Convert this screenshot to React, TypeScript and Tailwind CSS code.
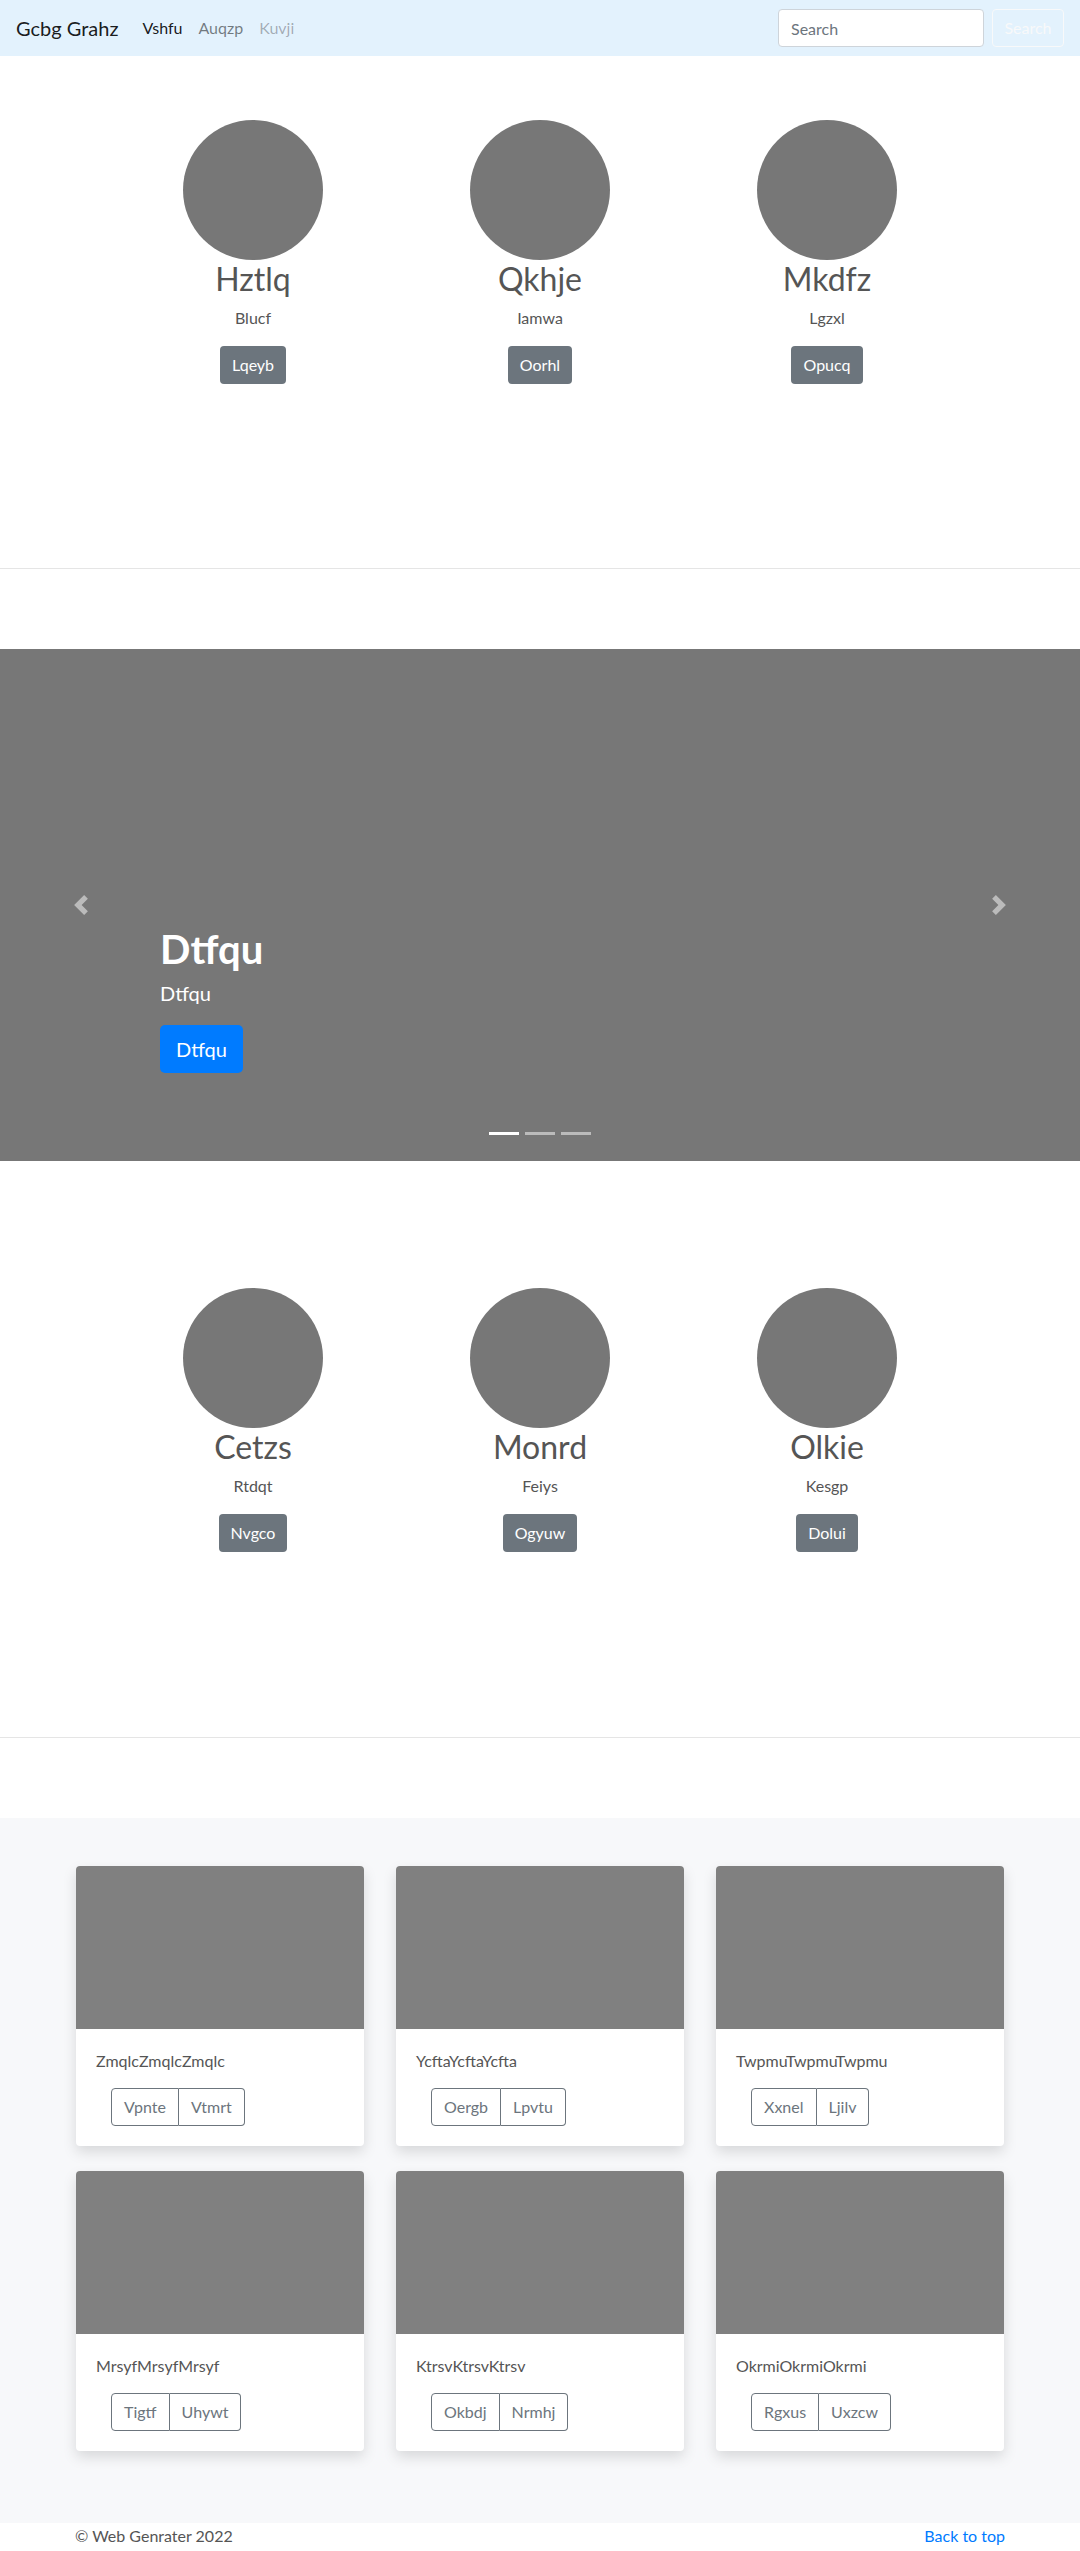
import React from "react";

const font = { fontFamily: "Lato, 'Open Sans', 'Liberation Sans', sans-serif" };

function Feature({ title, sub, btn }: { title: string; sub: string; btn: string }) {
  return (
    <div className="flex flex-col items-center text-center">
      <div className="w-[140px] h-[140px] rounded-full bg-[#777777]" />
      <h2 className="text-[32px] leading-[38px] font-normal text-[#555555] mb-2">{title}</h2>
      <p className="text-[16px] leading-6 text-[#555555] mb-4">{sub}</p>
      <button className="h-[38px] px-3 rounded-[4px] bg-[#6c757d] text-white text-[16px]">{btn}</button>
    </div>
  );
}

function Features({ items }: { items: [string, string, string][] }) {
  return (
    <div className="w-[861px] mx-auto grid grid-cols-3">
      {items.map(([t, s, b]) => (
        <Feature key={t} title={t} sub={s} btn={b} />
      ))}
    </div>
  );
}

function Card({ title, a, b }: { title: string; a: string; b: string }) {
  return (
    <div className="bg-white rounded-[4px] shadow-[0_6px_14px_rgba(0,0,0,0.13)] overflow-hidden">
      <div className="h-[163px] bg-[#808080]" />
      <div className="px-5 pt-5 pb-5">
        <p className="text-[16px] leading-6 text-[#555555] mb-[15px]">{title}</p>
        <div className="ml-[15px] inline-flex">
          <button className="h-[38px] px-3 border border-[#6c757d] text-[#6c757d] text-[16px] rounded-l-[4px]">{a}</button>
          <button className="h-[38px] px-3 border border-l-0 border-[#6c757d] text-[#6c757d] text-[16px] rounded-r-[4px]">{b}</button>
        </div>
      </div>
    </div>
  );
}

function Chevron({ dir }: { dir: "left" | "right" }) {
  return (
    <svg width="20" height="20" viewBox="0 0 8 8" fill="rgba(255,255,255,0.5)">
      {dir === "left" ? (
        <path d="M5.25 0l-4 4 4 4 1.5-1.5L4.25 4l2.5-2.5L5.25 0z" />
      ) : (
        <path d="M2.75 0l-1.5 1.5L3.75 4l-2.5 2.5L2.75 8l4-4-4-4z" />
      )}
    </svg>
  );
}

export default function App() {
  return (
    <div style={font} className="bg-white min-h-[2600px]">
      {/* Navbar */}
      <nav className="h-14 bg-[#e3f2fd] flex items-center px-4">
        <span className="text-[20px] text-[rgba(0,0,0,0.9)] mr-4">Gcbg Grahz</span>
        <a className="px-2 text-[16px] text-[rgba(0,0,0,0.9)]">Vshfu</a>
        <a className="px-2 text-[16px] text-[rgba(0,0,0,0.5)]">Auqzp</a>
        <a className="px-2 text-[16px] text-[rgba(0,0,0,0.3)]">Kuvji</a>
        <div className="ml-auto flex items-center gap-2">
          <input
            placeholder="Search"
            className="w-[206px] h-[38px] px-3 bg-white border border-[#ced4da] rounded-[4px] text-[16px] placeholder:text-[#6c757d] outline-none"
          />
          <button className="w-[72px] h-[38px] border border-[#f8f9fa] rounded-[4px] text-[#f8f9fa] text-[16px]">Search</button>
        </div>
      </nav>

      {/* Section 1 */}
      <section className="pt-16 pb-[184px]">
        <Features items={[["Hztlq", "Blucf", "Lqeyb"], ["Qkhje", "Iamwa", "Oorhl"], ["Mkdfz", "Lgzxl", "Opucq"]]} />
      </section>
      <div className="h-px bg-[#e5e5e5]" />

      {/* Carousel */}
      <div className="mt-20 relative h-[512px] bg-[#777777] flex flex-col justify-end pl-[160px] pb-[88px]">
        <div className="absolute left-[71px] top-[246px]">
          <Chevron dir="left" />
        </div>
        <div className="absolute right-[71px] top-[246px]">
          <Chevron dir="right" />
        </div>
        <h1 className="text-[40px] leading-[48px] font-bold text-white">Dtfqu</h1>
        <p className="text-[20px] leading-[30px] text-white mt-[5px] mb-[17px]">Dtfqu</p>
        <div>
          <button className="h-12 px-4 rounded-[5px] bg-[#007bff] text-white text-[20px]">Dtfqu</button>
        </div>
        <div className="absolute bottom-[26px] left-0 right-0 flex justify-center gap-[6px]">
          <span className="w-[30px] h-[3px] bg-white" />
          <span className="w-[30px] h-[3px] bg-white opacity-50" />
          <span className="w-[30px] h-[3px] bg-white opacity-50" />
        </div>
      </div>

      {/* Section 2 */}
      <section className="pt-[127px] pb-[185px]">
        <Features items={[["Cetzs", "Rtdqt", "Nvgco"], ["Monrd", "Feiys", "Ogyuw"], ["Olkie", "Kesgp", "Dolui"]]} />
      </section>
      <div className="h-px bg-[#e5e5e5]" />

      {/* Album */}
      <section className="mt-20 bg-[#f7f8fa] py-12">
        <div className="w-[928px] mx-auto grid grid-cols-3 gap-x-8 gap-y-[25px]">
          <Card title="ZmqlcZmqlcZmqlc" a="Vpnte" b="Vtmrt" />
          <Card title="YcftaYcftaYcfta" a="Oergb" b="Lpvtu" />
          <Card title="TwpmuTwpmuTwpmu" a="Xxnel" b="Ljilv" />
          <Card title="MrsyfMrsyfMrsyf" a="Tigtf" b="Uhywt" />
          <Card title="KtrsvKtrsvKtrsv" a="Okbdj" b="Nrmhj" />
          <Card title="OkrmiOkrmiOkrmi" a="Rgxus" b="Uxzcw" />
        </div>
        <div className="h-6" />
      </section>

      {/* Footer */}
      <footer className="w-[930px] mx-auto pt-px pb-12 flex justify-between text-[16px] leading-6">
        <p className="text-[#555555]">© Web Genrater 2022</p>
        <a className="text-[#007bff]">Back to top</a>
      </footer>
    </div>
  );
}
